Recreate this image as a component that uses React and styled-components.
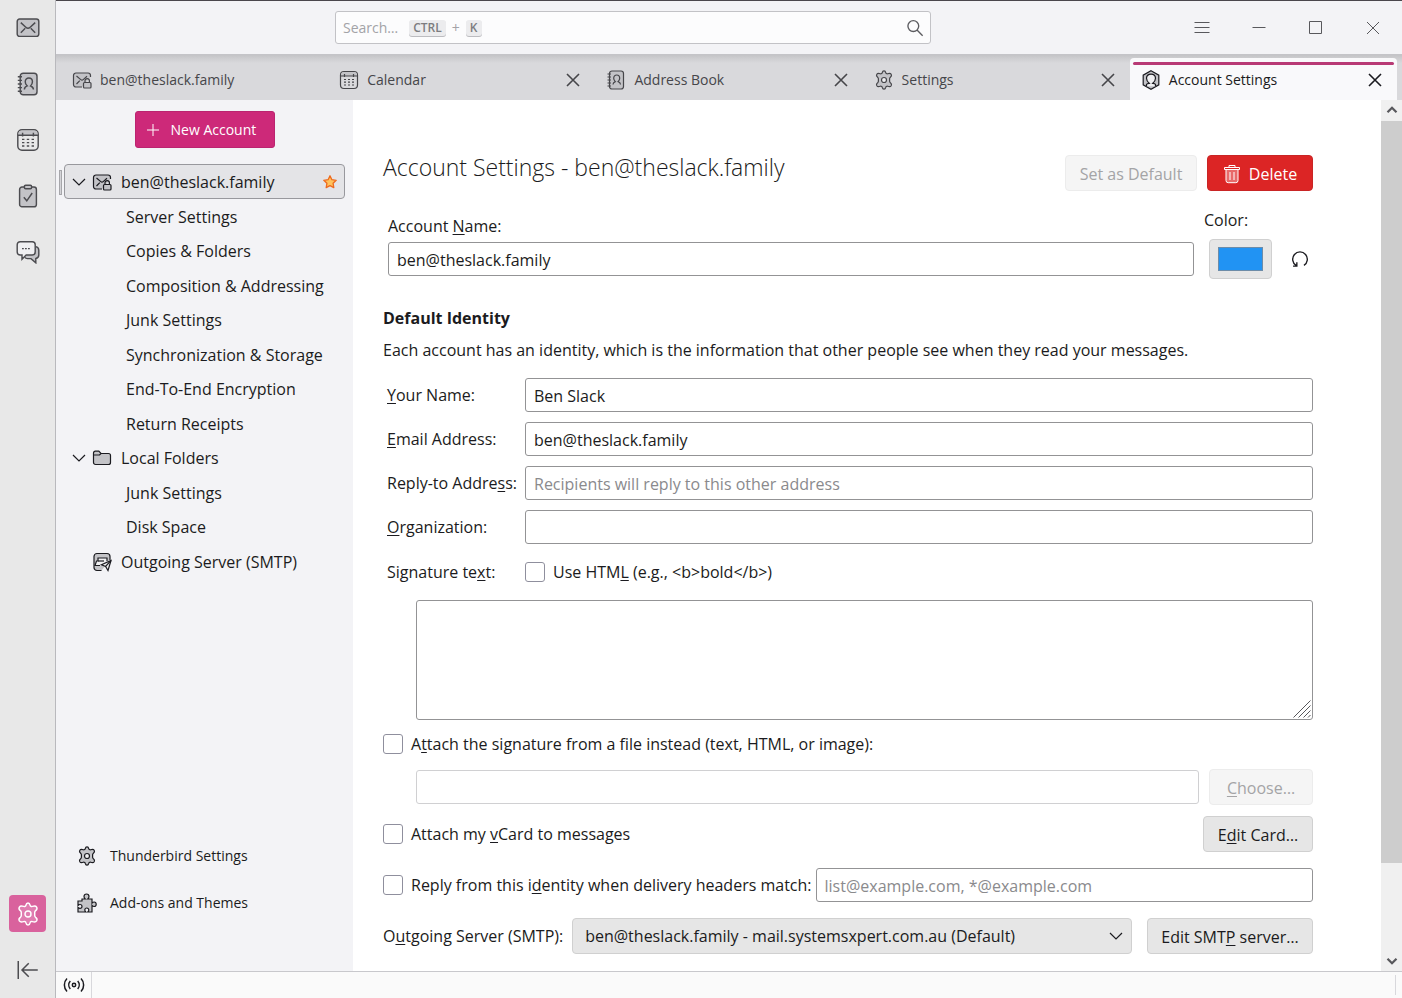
import React from 'react'

import styled, { createGlobalStyle, css } from 'styled-components';


const treeItems = [
    { label: 'ben@theslack.family', icon: 'mailLock', open: true, selected: true },
    { label: 'Server Settings' },
    { label: 'Copies & Folders' },
    { label: 'Composition & Addressing' },
    { label: 'Junk Settings' },
    { label: 'Synchronization & Storage' },
    { label: 'End-To-End Encryption' },
    { label: 'Return Receipts' },
    { label: 'Local Folders', icon: 'folder', open: true },
    { label: 'Junk Settings' },
    { label: 'Disk Space' },
    { label: 'Outgoing Server (SMTP)', icon: 'outgoing' },
]

const tabs = [
    { label: 'ben@theslack.family', icon: 'mailLock' },
    { label: 'Calendar', icon: 'calendar', closable: true },
    { label: 'Address Book', icon: 'addressBook', closable: true },
    { label: 'Settings', icon: 'gear', closable: true },
    { label: 'Account Settings', icon: 'account', closable: true, active: true },
]

const spaces = [
    { label: 'Mail', icon: 'mail' },
    { label: 'Address Book', icon: 'addressBook' },
    { label: 'Calendar', icon: 'calendar' },
    { label: 'Tasks', icon: 'tasks' },
    { label: 'Chat', icon: 'chat' },
]

const shapes = {
    mail: (
        <>
            <rect x="1" y="2.5" width="18" height="14.5" rx="2" />
            <path fill="none" d="M4 5.5l4.2 3.9c1 .9 2.6.9 3.6 0L16 5.5M4 14l3.700-3.700M16 14l-3.700-3.700" />
        </>
    ),
    addressBook: (
        <>
            <rect x="3.5" y="1" width="14" height="18" rx="2.5" />
            <path fill="none" d="M1.5 4h3.500M1.5 7h3.500M1.5 10h3.500M1.5 13h3.500M1.5 16h3.500" />
            <path fill="none" d="M7 14.5c0-2 .8-2.3 2.3-2.9C8 10.5 7.700 9.300 7.700 8.200 7.700 6.300 9 5 10.700 5s3 1.300 3 3.200c0 1.100-.4 2.300-1.600 3.400 1.500.6 2.400.9 2.400 2.900" />
        </>
    ),
    calendar: (
        <>
            <rect x="1.5" y="1.5" width="17" height="17" rx="3.5" fill="none" />
            <path stroke="none" d="M2 6V5a3 3 0 0 1 3-3h10a3 3 0 0 1 3 3v1z" />
            <path fill="none" d="M1.5 6h17M5.5 4v3M14.5 4v3" />
            <path fill="none" strokeDasharray="2 2" d="M5 9.5h11M5 12.2h11M5 15h11" />
        </>
    ),
    tasks: (
        <>
            <rect x="3" y="2.5" width="14" height="16.5" rx="2" />
            <rect x="7" y="1" width="6" height="3" rx="1" />
            <path fill="none" d="M6.5 11l2.5 3 4.5-6.5" />
        </>
    ),
    chat: (
        <>
            <path d="M16.500 5.500c1.700.3 2.500 1.300 2.500 3v4c0 1.500-.9 2.600-2.500 2.900V19l-4-3.500H9.500c-1 0-1.700-.4-2.200-1" />
            <path className="light" d="M3.500 1.500h10c1.600 0 2.500 1 2.500 2.500v6c0 1.500-.9 2.500-2.500 2.500H8.500L5 16v-3.500H3.500C2 12.500 1 11.500 1 10V4c0-1.500 1-2.500 2.500-2.500z" />
            <path fill="none" strokeDasharray="1.5 1" d="M5 7.2h7.500" />
        </>
    ),
    gear: (
        <>
            <path d="M8.300 2.600C8.500 1.300 9.100.8 10 .8s1.500.5 1.700 1.800c.1.800 1.100 1.400 2 1.100 1.700-.6 2.800-.5 3.500.6.700 1.200.4 2-.8 2.900-.5.400-.8 1-.8 1.500v2.600c0 .5.300 1.100.8 1.500 1.200.9 1.500 1.700.8 2.900-.7 1.100-1.800 1.200-3.500.6-.9-.3-1.900.3-2 1.100-.2 1.300-.8 1.800-1.700 1.800s-1.500-.5-1.700-1.800c-.1-.8-1.100-1.400-2-1.100-1.700.6-2.800.5-3.500-.6-.7-1.200-.4-2 .8-2.900.5-.4.800-1 .8-1.500V8.700c0-.5-.3-1.100-.8-1.500C2.400 6.300 2.100 5.500 2.800 4.300c.7-1.100 1.800-1.200 3.500-.6.900.3 1.900-.3 2-1.100z" />
            <circle className="light" cx="10" cy="10" r="2.500" />
        </>
    ),
    mailLock: (
        <>
            <path d="M10 17H4a2.500 2.500 0 0 1-2.500-2.500v-9A2.500 2.500 0 0 1 4 3h12a2.500 2.500 0 0 1 2.500 2.500V7" />
            <path fill="none" d="M4.500 6l4.300 3.600c.7.600 1.700.6 2.400 0L15 6.300M4.500 14l3.300-3.300" />
            <path fill="none" d="M13 12.500v-1.700a2.200 2.200 0 0 1 4.400 0v1.700" />
            <rect x="11.500" y="12.500" width="7.500" height="5.500" rx="1" />
        </>
    ),
    account: (
        <>
            <path d="M10 .8l7.800 4.300v9.800L10 19.200l-7.800-4.300V5.100z" />
            <path className="light" d="M5.500 16.300v-1.800c.3-.8 1-1 2.700-1.200-1.700-1.500-2.700-3-2.700-5C5.500 5.800 7.500 4.200 10 4.200s4.500 1.600 4.500 4.100c0 2-1 3.500-2.700 5 1.700.2 2.400.4 2.700 1.200v1.800" />
        </>
    ),
    folder: (
        <>
            <path d="M1.500 6V5A1.800 1.800 0 0 1 3.300 3.200h3.500L9 5.500h7.500A2 2 0 0 1 18.500 7.500V14.500a2 2 0 0 1-2 2h-13a2 2 0 0 1-2-2z" />
            <path fill="none" d="M1.500 7h6L9 5.500" />
        </>
    ),
    outgoing: (
        <>
            <path d="M9.500 18.500H5a3 3 0 0 1-3-3V4.500a3 3 0 0 1 3-3h10a3 3 0 0 1 3 3V8" />
            <path className="light" d="M8 13.500H3l1.500-4.500h1.500V6h9v3" />
            <path fill="none" d="M6 9h6" />
            <path className="light" d="M19 8.500l-9.500 4.300 4.100 1.600L16 18.500z" />
            <path fill="none" d="M13.600 14.400L19 8.500" />
        </>
    ),
    puzzle: (
        <path d="M5 6h3.200c-.8-.8-1.200-1.500-1.200-2.500C7 2 8 1 9.500 1S12 2 12 3.500c0 1-.4 1.700-1.200 2.500H15v4.200c.7-.8 1.400-1.200 2.200-1.200 1.300 0 2 1 2 2.300s-.7 2.200-2 2.200c-.8 0-1.500-.4-2.200-1.200V19h-4.200c.7-.8 1-1.300 1-2 0-1.200-.8-2-2-2s-2 .8-2 2c0 .7.300 1.200 1 2H1v-4.500c.7.600 1.300.9 2 .9 1.200 0 2-.8 2-1.900s-.8-2-2-2c-.7 0-1.300.3-2 1V8h4z" />
    ),
}

const Icon = ({ name, size = 20 }) => (
    <IconSvg width={size} height={size} viewBox="0 0 20 20" aria-hidden="true">
        {shapes[name]}
    </IconSvg>
)

const LineIcon = ({ d, size = 16, weight = 1 }) => (
    <LineSvg width={size} height={size} viewBox="0 0 16 16" strokeWidth={weight} aria-hidden="true">
        <path d={d} />
    </LineSvg>
)

const chevronDown = 'M2 5l6 6 6-6'
const cross = 'M2 2l12 12M14 2L2 14'

const SpacesToolbar = () => (
    <Spaces aria-label="Spaces">
        <SpaceGroup>
            {spaces.map(space => (
                <SpaceButton key={space.label} aria-label={space.label}>
                    <Icon name={space.icon} size={24} />
                </SpaceButton>
            ))}
        </SpaceGroup>
        <SpaceGroup>
            <SpaceButton aria-label="Settings" $current><Icon name="gear" size={24} /></SpaceButton>
            <SpaceButton aria-label="Collapse"><LineIcon size={24} d="M1.500 2v12M14.500 8H4M8.500 3.500L4 8l4.500 4.500" /></SpaceButton>
        </SpaceGroup>
    </Spaces>
)

const TitleBar = () => (
    <Header>
        <SearchBox>
            <SearchInput type="search" aria-label="Search" />
            <SearchHint aria-hidden="true">Search… <Key>CTRL</Key><span>+</span><Key>K</Key></SearchHint>
            <LineIcon size={18} weight={1.2} d="M6.500 1.500a4.800 4.800 0 1 0 0 9.600 4.800 4.800 0 0 0 0-9.600zM10 10l4.800 4.800" />
        </SearchBox>
        <WindowControls>
            <PlainButton aria-label="Menu"><LineIcon weight={1.2} d="M.5 2.500h15M.5 7.500h15M.5 12.500h15" /></PlainButton>
            <PlainButton aria-label="Minimize"><LineIcon d="M1.500 7.500h13" /></PlainButton>
            <PlainButton aria-label="Maximize"><LineIcon d="M1.500 1.500h12v12h-12z" /></PlainButton>
            <PlainButton aria-label="Close"><LineIcon d={cross} /></PlainButton>
        </WindowControls>
    </Header>
)

const TabStrip = () => (
    <Tabs role="tablist">
        {tabs.map(tab => (
            <Tab key={tab.label} role="tab" aria-selected={!!tab.active} $active={tab.active}>
                <Icon name={tab.icon} />
                <TabLabel>{tab.label}</TabLabel>
                {tab.closable && <PlainButton aria-label={`Close ${tab.label}`}><LineIcon weight={1.6} d={cross} /></PlainButton>}
            </Tab>
        ))}
    </Tabs>
)

const AccountTree = () => (
    <Sidebar>
        <NewAccount><LineIcon d="M8 2v12M2 8h12" />New Account</NewAccount>
        <Tree>
            {treeItems.map((item, i) => (
                <TreeRow key={i} $selected={item.selected}>
                    {item.icon ? (
                        <>
                            <Twisty>{item.open && <LineIcon weight={1.2} d={chevronDown} />}</Twisty>
                            <Icon name={item.icon} />
                            <TreeLabel>{item.label}</TreeLabel>
                            {item.selected && (
                                <Star width="16" height="16" viewBox="0 0 16 16" aria-label="Default account">
                                    <path d="M8 1.800l1.900 3.900 4.300.6-3.100 3 .7 4.300L8 11.600l-3.800 2 .7-4.300-3.100-3 4.300-.6z" />
                                </Star>
                            )}
                        </>
                    ) : <TreeChild>{item.label}</TreeChild>}
                </TreeRow>
            ))}
        </Tree>
        <SidebarLinks>
            <SidebarLink href="#settings"><Icon name="gear" />Thunderbird Settings</SidebarLink>
            <SidebarLink href="#addons"><Icon name="puzzle" />Add-ons and Themes</SidebarLink>
        </SidebarLinks>
    </Sidebar>
)

const AccountForm = () => (
    <Form onSubmit={e => e.preventDefault()}>
        <TitleRow>
            <Title>Account Settings - ben@theslack.family</Title>
            <Button type="button" $width={132} disabled>Set as Default</Button>
            <Button type="button" $width={106} $danger>
                <svg width="18" height="20" viewBox="0 0 18 20" fill="none" stroke="currentColor" aria-hidden="true">
                    <path fill="#e86a6a" d="M3 5.500v11a2.200 2.200 0 0 0 2.200 2.200h7.600a2.200 2.200 0 0 0 2.200-2.200v-11" />
                    <path d="M1.500 3.500h15v2h-15zM6 3.300V1.500h6v1.800M7 8v8M11 8v8" />
                </svg>
                Delete
            </Button>
        </TitleRow>

        <NameRow>
            <NameField>
                <label htmlFor="accountName">Account <u>N</u>ame:</label>
                <TextInput id="accountName" defaultValue="ben@theslack.family" />
            </NameField>
            <ColorField>
                <label htmlFor="accountColor">Color:</label>
                <ColorControls>
                    <ColorInput id="accountColor" type="color" defaultValue="#2193f3" />
                    <PlainButton type="button" aria-label="Reset color">
                        <LineIcon size={18} weight={1.2} d="M11.500 13.700A6.500 6.500 0 1 0 4.500 13.700M1.800 14.300h3.400v-3.400" />
                    </PlainButton>
                </ColorControls>
            </ColorField>
        </NameRow>

        <SectionTitle>Default Identity</SectionTitle>
        <Description>Each account has an identity, which is the information that other people see when they read your messages.</Description>

        <Identity>
            <label htmlFor="yourName"><u>Y</u>our Name:</label>
            <TextInput id="yourName" defaultValue="Ben Slack" />
            <label htmlFor="email"><u>E</u>mail Address:</label>
            <TextInput id="email" defaultValue="ben@theslack.family" />
            <label htmlFor="replyTo">Reply-to Addre<u>s</u>s:</label>
            <TextInput id="replyTo" placeholder="Recipients will reply to this other address" />
            <label htmlFor="organization"><u>O</u>rganization:</label>
            <TextInput id="organization" />
            <label htmlFor="signature">Signature te<u>x</u>t:</label>
            <CheckLabel><Checkbox type="checkbox" />Use HTM<u>L</u> (e.g., &lt;b&gt;bold&lt;/b&gt;)</CheckLabel>
        </Identity>

        <SignatureBox>
            <Signature id="signature" />
            <Grip width="18" height="18" viewBox="0 0 18 18" aria-hidden="true">
                <path d="M.5 17.500l17-17M5.500 17.500l12-12M10.500 17.500l7-7M15 17.500l2.500-2.500" />
            </Grip>
        </SignatureBox>

        <CheckLabel><Checkbox type="checkbox" /><span>A<u>t</u>tach the signature from a file instead (text, HTML, or image):</span></CheckLabel>
        <FileRow>
            <TextInput aria-label="Signature file" disabled />
            <Button type="button" $width={104} disabled><span><u>C</u>hoose…</span></Button>
        </FileRow>
        <Row>
            <CheckLabel><Checkbox type="checkbox" /><span>Attach my <u>v</u>Card to messages</span></CheckLabel>
            <Button type="button" $width={110}><span>E<u>d</u>it Card…</span></Button>
        </Row>
        <Row>
            <CheckLabel><Checkbox type="checkbox" /><span>Reply from this i<u>d</u>entity when delivery headers match:</span></CheckLabel>
            <TextInput aria-label="Delivery headers" placeholder="list@example.com, *@example.com" />
        </Row>
        <ServerRow>
            <label htmlFor="smtp">O<u>u</u>tgoing Server (SMTP):</label>
            <SelectBox>
                <Select id="smtp">
                    <option>ben@theslack.family - mail.systemsxpert.com.au (Default)</option>
                </Select>
                <LineIcon d={chevronDown} weight={1.2} />
            </SelectBox>
            <Button type="button" $width={166}><span>Edit SMT<u>P</u> server…</span></Button>
        </ServerRow>
    </Form>
)

const App = () => (
    <Window>
        <GlobalStyle />
        <SpacesToolbar />
        <Main>
            <TitleBar />
            <TabStrip />
            <Body>
                <AccountTree />
                <AccountForm />
                <Scrollbar aria-hidden="true">
                    <LineIcon weight={3} size={12} d="M2 11l6-6 6 6" />
                    <Track><Thumb /></Track>
                    <LineIcon weight={3} size={12} d={chevronDown} />
                </Scrollbar>
            </Body>
            <StatusBar>
                <StatusItem>
                    <svg width="22" height="16" viewBox="0 0 22 16" fill="none" stroke="currentColor" strokeWidth="1.5" aria-label="Online">
                        <circle cx="11" cy="8" r="1.7" />
                        <path d="M4 1.500C.5 5 .5 11 4 14.500M18 1.500c3.500 3.500 3.500 9.500 0 13M7.300 4c-2 2.300-2 5.700 0 8M14.700 4c2 2.300 2 5.700 0 8" />
                    </svg>
                </StatusItem>
                <StatusText role="status" />
            </StatusBar>
        </Main>
    </Window>
)

export default App;


const GlobalStyle = createGlobalStyle`
    *, *::before {
        box-sizing: border-box;
    }

    body {
        margin: 0;
        font-family: 'Open Sans', 'Noto Sans', sans-serif;
        font-size: 16px;
        line-height: 22px;
        color: #1b1b20;
    }

    button, input, select, textarea {
        font: inherit;
        color: inherit;
        margin: 0;
    }

    svg {
        flex: none;
    }

    u {
        text-underline-offset: 2px;
    }
`

const IconSvg = styled.svg`
    fill: #c3c3c7;
    stroke: currentColor;
    stroke-width: 1.2;

    & .light {
        fill: #f0f0f2;
    }
`

const LineSvg = styled.svg`
    fill: none;
    stroke: currentColor;
`

const Window = styled.div`
    display: flex;
    height: 100vh;
`

const Spaces = styled.nav`
    display: flex;
    flex-direction: column;
    justify-content: space-between;
    width: 56px;
    padding: 9px 9px 10px;
    background: #e8e8e8;
    border-right: 1px solid #b9b9bd;
    color: #4c4c50;
`

const SpaceGroup = styled.div`
    display: flex;
    flex-direction: column;
    gap: 19px;
`

const SpaceButton = styled.button`
    display: flex;
    align-items: center;
    justify-content: center;
    width: 37px;
    height: 37px;
    padding: 0;
    border: none;
    border-radius: 4px;
    background: none;

    ${({$current}) => $current && css`
        background: #d9629d;
        color: #fff;

        & svg, & svg .light {
            fill: #e07db0;
        }
    `}
`

const Main = styled.div`
    display: flex;
    flex-direction: column;
    flex: 1;
    min-width: 0;
`

const Header = styled.header`
    display: flex;
    align-items: center;
    justify-content: space-between;
    height: 55px;
    padding: 0 21px 0 279px;
    background: #f3f3f6;
    border-top: 1px solid #4a464c;
    border-bottom: 1px solid #c4c4c8;
`

const SearchBox = styled.div`
    position: relative;
    display: flex;
    align-items: center;
    flex: 0 1 596px;
    height: 33px;
    padding-right: 6px;
    background: #fcfcfd;
    border: 1px solid #c2c2c6;
    border-radius: 3px;
    color: #5c5c60;
`

const SearchInput = styled.input`
    flex: 1;
    min-width: 0;
    border: none;
    outline: none;
    background: none;
`

const SearchHint = styled.span`
    position: absolute;
    left: 7px;
    display: flex;
    align-items: center;
    gap: 6px;
    font-size: 14px;
    color: #a3a3a7;
    pointer-events: none;
`

const Key = styled.kbd`
    padding: 0 4px;
    font-family: inherit;
    font-size: 12px;
    font-weight: 600;
    line-height: 16px;
    color: #7c7c80;
    background: #ececee;
    border-radius: 3px;
    box-shadow: 0 1px 0 #bcbcc0;

    &:first-of-type {
        margin-left: 5px;
    }
`

const WindowControls = styled.div`
    display: flex;
    gap: 41px;
    color: #58585c;
`

const PlainButton = styled.button`
    display: flex;
    padding: 0;
    border: none;
    background: none;
`

const Tabs = styled.div`
    display: flex;
    height: 45px;
    padding: 3px 5px 0 5px;
    background: linear-gradient(#c4c4c7, #d9d9dc 8px);
`

const Tab = styled.div`
    display: flex;
    align-items: center;
    flex: 1;
    min-width: 0;
    gap: 8px;
    padding: 2px 14px 0 11px;
    font-size: 14px;
    color: #46464a;

    ${({$active}) => $active && css`
        position: relative;
        background: #f9f9fb;
        border-radius: 4px 4px 0 0;
        color: #1b1b20;

        &::before {
            content: '';
            position: absolute;
            top: 4px;
            left: 3px;
            right: 3px;
            height: 3px;
            border-radius: 2px;
            background: #b83a75;
        }
    `}
`

const TabLabel = styled.span`
    flex: 1;
    white-space: nowrap;
`

const Body = styled.div`
    display: flex;
    flex: 1;
    min-height: 0;
`

const Sidebar = styled.aside`
    display: flex;
    flex-direction: column;
    width: 297px;
    padding: 11px 8px 57px;
    background: #f3f3f6;
`

const NewAccount = styled.button`
    display: flex;
    align-items: center;
    align-self: center;
    gap: 10px;
    width: 140px;
    height: 37px;
    padding: 0 9px;
    font-size: 14px;
    color: #fff;
    background: #cd2979;
    border: 1px solid #bb2470;
    border-radius: 3px;
`

const Tree = styled.ul`
    display: grid;
    grid-template-rows: repeat(12, 1fr);
    height: 414px;
    margin: 16px 0 0;
    padding: 0;
    list-style: none;
`

const TreeRow = styled.li`
    position: relative;
    display: flex;
    align-items: center;
    padding: 2px 6px 0;
    border: 1px solid transparent;
    border-radius: 4px;
    white-space: nowrap;

    ${({$selected}) => $selected && css`
        background: #e4e4e7;
        border-color: #98989d;

        &::before {
            content: '';
            position: absolute;
            left: -6px;
            width: 3px;
            height: 25px;
            background: #d4d4d8;
            border: 1px solid #a6a6aa;
        }
    `}
`

const Twisty = styled.span`
    display: flex;
    width: 21px;
`

const TreeLabel = styled.span`
    flex: 1;
    padding-left: 9px;
`

const TreeChild = styled.span`
    padding-left: 55px;
`

const Star = styled.svg`
    fill: #ffc35c;
    stroke: #ee6a1f;
    stroke-width: 1.3;
    stroke-linejoin: round;
`

const SidebarLinks = styled.div`
    display: flex;
    flex-direction: column;
    gap: 25px;
    margin-top: auto;
    padding-left: 13px;
`

const SidebarLink = styled.a`
    display: flex;
    align-items: center;
    gap: 13px;
    font-size: 14px;
    color: inherit;
    text-decoration: none;
`

const Form = styled.form`
    display: flex;
    flex-direction: column;
    flex: 1;
    min-width: 0;
    padding: 55px 68px 0 30px;
    overflow: hidden;
    background: #fff;
`

const Row = styled.div`
    display: flex;
    align-items: center;
    justify-content: space-between;
    gap: 4px;
    margin-bottom: 16px;
    white-space: nowrap;
`

const TitleRow = styled(Row)`
    gap: 10px;
    margin: 0;
`

const Title = styled.h1`
    flex: 1;
    margin: 0;
    padding-bottom: 12px;
    font-size: 23px;
    font-weight: 300;
    line-height: 24px;
`

const Button = styled.button`
    display: flex;
    align-items: center;
    justify-content: center;
    flex: none;
    gap: 8px;
    width: ${({$width}) => $width}px;
    height: 36px;
    padding: 2px 0 0;
    background: ${({$danger}) => $danger ? '#dc2525' : '#e6e6e6'};
    color: ${({$danger}) => $danger ? '#fff' : 'inherit'};
    border: 1px solid ${({$danger}) => $danger ? '#c92525' : '#d0d0d0'};
    border-radius: 4px;

    &:disabled {
        color: #a4a4a6;
        background: #f5f5f5;
        border-color: #ececec;
    }
`

const TextInput = styled.input`
    flex: 1;
    width: 100%;
    min-width: 0;
    height: 34px;
    padding: 1px 8px 0;
    background: #fff;
    border: 1px solid #939395;
    border-radius: 3px;

    &::placeholder {
        color: #8a8a8d;
        opacity: 1;
    }

    &:disabled {
        border-color: #d0d0d2;
    }
`

const NameRow = styled.div`
    display: flex;
    gap: 10px;
    padding: 18px 0 0 5px;
`

const NameField = styled.div`
    display: flex;
    flex-direction: column;
    flex: 1;
    gap: 5px;
    padding-top: 6px;

    & input {
        flex: none;
    }
`

const ColorField = styled.div`
    display: flex;
    flex-direction: column;
    gap: 8px;
    width: 109px;
`

const ColorControls = styled.div`
    display: flex;
    align-items: center;
    gap: 19px;
    padding-left: 5px;
`

const ColorInput = styled.input`
    width: 63px;
    height: 40px;
    padding: 7px 8px;
    background: #e6e6e6;
    border: 1px solid #d0d0d0;
    border-radius: 4px;

    &::-webkit-color-swatch-wrapper {
        padding: 0;
    }

    &::-webkit-color-swatch {
        border: 1px solid #6d8ca8;
    }
`

const SectionTitle = styled.h2`
    margin: 28px 0 10px;
    font-size: 16px;
    font-weight: 700;
    line-height: 22px;
`

const Description = styled.p`
    margin: 0 0 17px;
`

const Identity = styled.div`
    display: grid;
    grid-template-columns: 128px 1fr;
    grid-template-rows: repeat(4, 34px) 36px;
    gap: 10px;
    align-items: center;
    padding-left: 4px;
    white-space: nowrap;
`

const CheckLabel = styled.label`
    display: flex;
    align-items: center;
    white-space: pre;
`

const Checkbox = styled.input`
    appearance: none;
    width: 20px;
    height: 20px;
    margin-right: 8px;
    background: #fff;
    border: 1px solid #8f8f9d;
    border-radius: 3px;
`

const SignatureBox = styled.div`
    position: relative;
    display: flex;
    margin: 10px 0 13px 33px;
`

const Signature = styled.textarea`
    flex: 1;
    height: 120px;
    padding: 8px;
    border: 1px solid #939395;
    border-radius: 3px;
    resize: none;
`

const Grip = styled.svg`
    position: absolute;
    right: 2px;
    bottom: 2px;
    stroke: #58585c;
    pointer-events: none;
`

const FileRow = styled(Row)`
    gap: 10px;
    margin: 14px 0 11px 33px;
`

const ServerRow = styled(Row)`
    gap: 9px;
    margin: 0;
`

const SelectBox = styled.div`
    position: relative;
    display: flex;
    flex: 1;
    margin-right: 6px;

    & svg {
        position: absolute;
        top: 10px;
        right: 8px;
        pointer-events: none;
    }
`

const Select = styled.select`
    appearance: none;
    width: 100%;
    height: 36px;
    padding: 0 12px;
    background: #e6e6e6;
    border: 1px solid #d0d0d0;
    border-radius: 4px;
`

const Scrollbar = styled.div`
    display: flex;
    flex-direction: column;
    align-items: center;
    gap: 5px;
    width: 21px;
    padding: 4px 0;
    background: #f0f0f0;
    color: #58585c;
`

const Track = styled.div`
    display: grid;
    grid-template-rows: 17fr 2fr;
    flex: 1;
    width: 100%;
`

const Thumb = styled.div`
    background: #cdcdcd;
`

const StatusBar = styled.footer`
    display: flex;
    height: 27px;
    padding-right: 6px;
    background: #fafafa;
    border-top: 1px solid #c8c8cc;
`

const StatusItem = styled.div`
    display: flex;
    align-items: center;
    padding: 0 6px 0 7px;
    border-right: 1px solid #d8d8dc;
`

const StatusText = styled.div`
    flex: 1;
    margin: 3px 0;
    border-right: 1px solid #d8d8dc;
`
